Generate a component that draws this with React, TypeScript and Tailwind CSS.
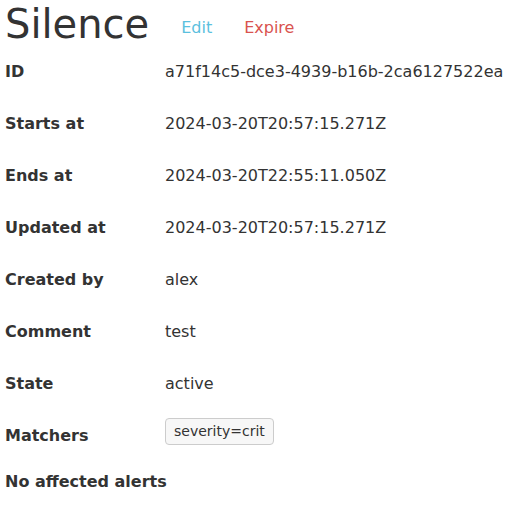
const rows: [string, string][] = [
  ['ID', 'a71f14c5-dce3-4939-b16b-2ca6127522ea'],
  ['Starts at', '2024-03-20T20:57:15.271Z'],
  ['Ends at', '2024-03-20T22:55:11.050Z'],
  ['Updated at', '2024-03-20T20:57:15.271Z'],
  ['Created by', 'alex'],
  ['Comment', 'test'],
  ['State', 'active'],
];

export default function App() {
  return (
    <div
      className="w-[507px] h-[511px] bg-white text-[#333333] text-base overflow-hidden"
      style={{ fontFamily: '"DejaVu Sans", sans-serif' }}
    >
      {/* Header */}
      <div className="flex items-start h-[46px] pl-[5px]">
        <h1 className="text-[40px] leading-[48px] font-normal">Silence</h1>
        <a className="ml-[32px] mt-[16px] leading-6 text-[#5bc0de] cursor-pointer">Edit</a>
        <a className="ml-[32px] mt-[16px] leading-6 text-[#d9534f] cursor-pointer">Expire</a>
      </div>

      {/* Details */}
      {rows.map(([label, value]) => (
        <div key={label} className="flex items-center h-[52px] pl-[5px]">
          <div className="w-[160px] font-bold leading-6">{label}</div>
          <div className="leading-6">{value}</div>
        </div>
      ))}

      <div className="flex items-center h-[52px] pl-[5px]">
        <div className="w-[160px] font-bold leading-6">Matchers</div>
        <div className="-mt-[9px]">
          <span className="inline-block text-sm leading-[21px] py-[2px] px-2 bg-[#f7f7f7] border border-[#cccccc] rounded">
            severity=crit
          </span>
        </div>
      </div>

      <div className="pl-[5px] mt-[8px] font-bold leading-6">No affected alerts</div>
    </div>
  );
}
